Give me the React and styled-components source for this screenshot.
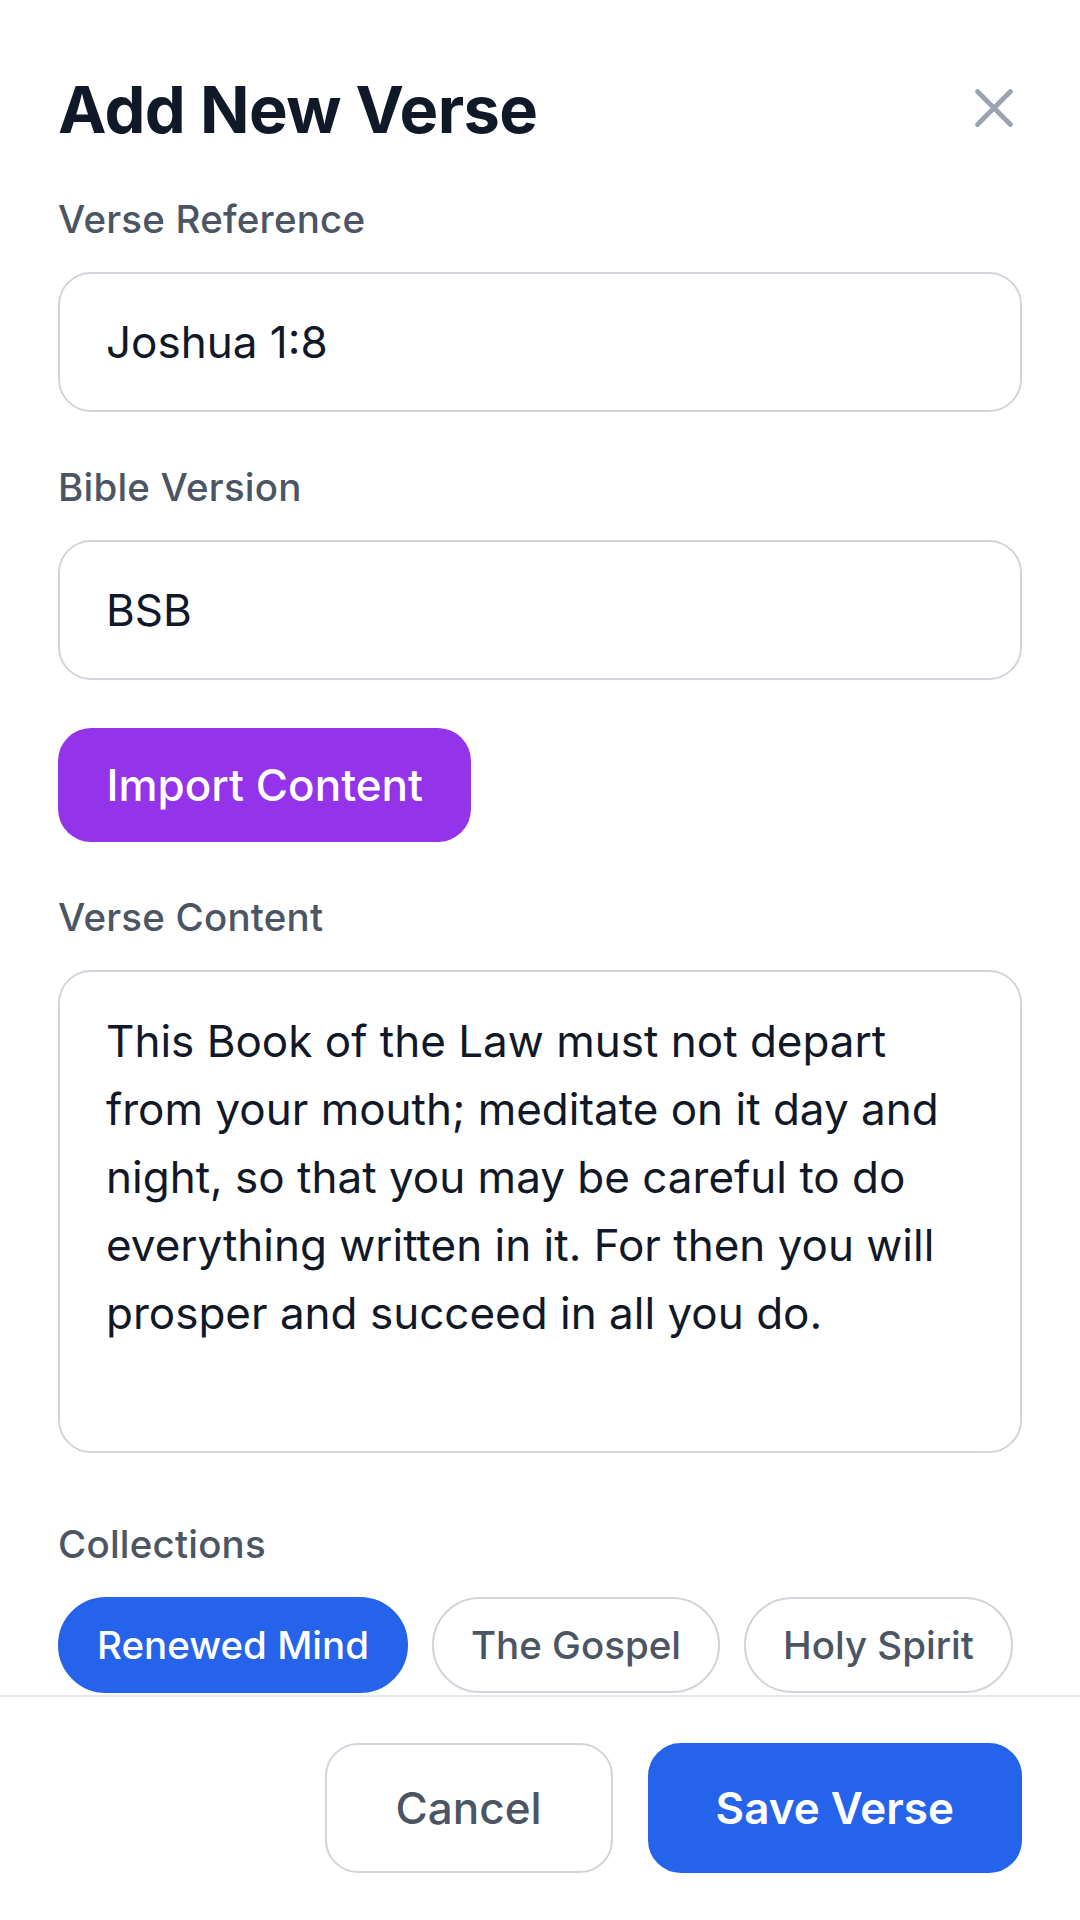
import React from "react";
import styled, { createGlobalStyle } from "styled-components";
import { X } from "lucide-react";

const GlobalStyle = createGlobalStyle`
    html, body {
        margin: 0;
        padding: 0;
        background: #ffffff;
    }
    * {
        box-sizing: border-box;
    }
    body {
        font-family: Inter, "Noto Sans", "Liberation Sans", sans-serif;
    }
`

const Sheet = styled.div`
    width: 1080px;
    height: 1920px;
    display: flex;
    flex-direction: column;
    background: #ffffff;
    overflow: hidden;
`

const Body = styled.div`
    flex: 1;
    min-height: 0;
    overflow: hidden;
    padding: 70px 58px 0 58px;
`

const Header = styled.div`
    height: 80px;
    display: flex;
    align-items: center;
    justify-content: space-between;
`

const Title = styled.h2`
    margin: 0;
    font-size: 65px;
    line-height: 80px;
    font-weight: 700;
    color: #111827;
    letter-spacing: -0.6px;
`

const CloseButton = styled.button`
    width: 66px;
    height: 66px;
    margin-right: -5px;
    margin-top: -4px;
    padding: 0;
    border: none;
    background: none;
    color: #9ca3af;
    display: flex;
    align-items: center;
    justify-content: center;
`

const Form = styled.div`
    margin-top: 42px;
    display: flex;
    flex-direction: column;
    gap: 48px;
`

const Field = styled.div`
    display: flex;
    flex-direction: column;
    gap: 25px;
    margin-top: ${p => p.$extra || 0}px;
`

const Label = styled.label`
    font-size: 38.5px;
    line-height: 55px;
    font-weight: 500;
    color: #4b5563;
    letter-spacing: 0.2px;
`

const TextInput = styled.input`
    width: 100%;
    height: 140px;
    padding: 0 46px;
    border: 2.75px solid #d1d5db;
    border-radius: 33px;
    font-family: inherit;
    font-size: 44px;
    color: #111827;
    background: #ffffff;
    outline: none;
`

const TextArea = styled.textarea`
    width: 100%;
    height: 483px;
    padding: 35px 46px;
    border: 2.75px solid #d1d5db;
    border-radius: 33px;
    font-family: inherit;
    font-size: 44px;
    line-height: 68px;
    color: #111827;
    background: #ffffff;
    resize: none;
    outline: none;
    overflow: hidden;
`

const ImportButton = styled.button`
    align-self: flex-start;
    height: 114px;
    padding: 0 48.5px;
    border: none;
    border-radius: 33px;
    background: #9333ea;
    color: #ffffff;
    font-family: inherit;
    font-size: 44px;
    font-weight: 500;
`

const ChipRow = styled.div`
    display: flex;
    flex-wrap: wrap;
    gap: 24px;
`

const Chip = styled.button`
    height: 96px;
    padding: 0 37px;
    border-radius: 999px;
    border: 2.75px solid ${p => (p.$active ? "#2563eb" : "#d1d5db")};
    background: ${p => (p.$active ? "#2563eb" : "#ffffff")};
    color: ${p => (p.$active ? "#ffffff" : "#4b5563")};
    font-family: inherit;
    font-size: 38.5px;
    font-weight: 500;
`

const Footer = styled.div`
    height: 225px;
    flex-shrink: 0;
    border-top: 2.75px solid #e5e7eb;
    padding: 46px 58px 0 58px;
    display: flex;
    justify-content: flex-end;
    align-items: flex-start;
    gap: 35px;
    background: #ffffff;
`

const FooterButton = styled.button`
    height: 130px;
    padding: 0 ${p => (p.$primary ? 66 : 69)}px;
    border-radius: 33px;
    border: 2.75px solid ${p => (p.$primary ? "#2563eb" : "#d1d5db")};
    background: ${p => (p.$primary ? "#2563eb" : "#ffffff")};
    color: ${p => (p.$primary ? "#ffffff" : "#4b5563")};
    font-family: inherit;
    font-size: 44px;
    font-weight: ${p => (p.$primary ? 600 : 500)};
`

const collections = [
    { name: "Renewed Mind", active: true },
    { name: "The Gospel", active: false },
    { name: "Holy Spirit", active: false },
]

const verseText =
    "This Book of the Law must not depart from your mouth; meditate on it day and night, so that you may be careful to do everything written in it. For then you will prosper and succeed in all you do."

const App = () => {
    return (
        <>
            <GlobalStyle />
            <Sheet>
                <Body>
                    <Header>
                        <Title>Add New Verse</Title>
                        <CloseButton aria-label="Close">
                            <X size={66} strokeWidth={1.75} />
                        </CloseButton>
                    </Header>
                    <Form>
                        <Field>
                            <Label>Verse Reference</Label>
                            <TextInput defaultValue="Joshua 1:8" readOnly />
                        </Field>
                        <Field>
                            <Label>Bible Version</Label>
                            <TextInput defaultValue="BSB" readOnly />
                        </Field>
                        <ImportButton>Import Content</ImportButton>
                        <Field>
                            <Label>Verse Content</Label>
                            <TextArea defaultValue={verseText} readOnly />
                        </Field>
                        <Field $extra={16}>
                            <Label>Collections</Label>
                            <ChipRow>
                                {collections.map(c => (
                                    <Chip key={c.name} $active={c.active}>{c.name}</Chip>
                                ))}
                            </ChipRow>
                        </Field>
                    </Form>
                </Body>
                <Footer>
                    <FooterButton>Cancel</FooterButton>
                    <FooterButton $primary>Save Verse</FooterButton>
                </Footer>
            </Sheet>
        </>
    )
}

export default App;
